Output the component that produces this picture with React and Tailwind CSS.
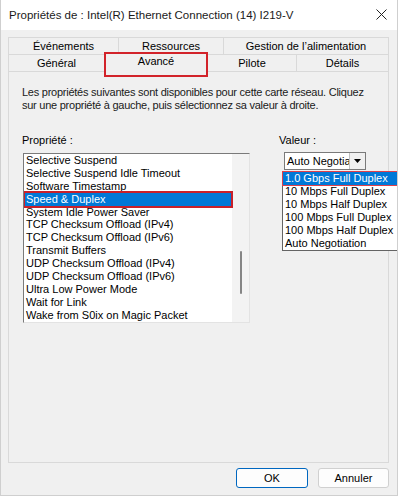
import React from "react";

const props = [
  "Selective Suspend",
  "Selective Suspend Idle Timeout",
  "Software Timestamp",
  "Speed & Duplex",
  "System Idle Power Saver",
  "TCP Checksum Offload (IPv4)",
  "TCP Checksum Offload (IPv6)",
  "Transmit Buffers",
  "UDP Checksum Offload (IPv4)",
  "UDP Checksum Offload (IPv6)",
  "Ultra Low Power Mode",
  "Wait for Link",
  "Wake from S0ix on Magic Packet",
];

const values = [
  "1.0 Gbps Full Duplex",
  "10 Mbps Full Duplex",
  "10 Mbps Half Duplex",
  "100 Mbps Full Duplex",
  "100 Mbps Half Duplex",
  "Auto Negotiation",
];

export default function App() {
  return (
    <div className="w-[398px] h-[496px] bg-[#f0f0f0] flex flex-col font-['Liberation_Sans',Arial,sans-serif] text-black text-[11px] leading-[13px] border-x border-b border-[#cfcfcf] overflow-hidden">
      {/* Title bar */}
      <div className="h-[30px] bg-white flex items-center justify-between pl-[8px] pr-[10px] shrink-0">
        <span className="text-[11.5px] text-[#1a1a1a]">
          Propriétés de : Intel(R) Ethernet Connection (14) I219-V
        </span>
        <svg width="11" height="11" viewBox="0 0 11 11" className="mt-[-2px]">
          <path d="M0.5 0.5 L10.5 10.5 M10.5 0.5 L0.5 10.5" stroke="#222" strokeWidth="1" fill="none" />
        </svg>
      </div>

      {/* Tabs */}
      <div className="relative w-[381px] ml-[7px] mt-[7px] shrink-0">
        <div className="flex h-[17px]">
          <div className="w-[110px] border-t border-l border-[#d9d9d9] flex items-center justify-center">Événements</div>
          <div className="w-[105px] border-t border-l border-[#d9d9d9] flex items-center justify-center">Ressources</div>
          <div className="w-[166px] border-t border-l border-r border-[#d9d9d9] flex items-center justify-center">Gestion de l’alimentation</div>
        </div>
        <div className="flex h-[18px] border-b border-[#d9d9d9]">
          <div className="w-[96px] border-t border-l border-[#d9d9d9] flex items-center justify-center">Général</div>
          <div className="relative z-10 w-[104px] h-[21px] mt-[-2px] border-t border-l border-r border-[#d9d9d9] bg-[#f0f0f0] flex items-start justify-center pt-[2px]">
            Avancé
          </div>
          <div className="w-[88px] border-t border-[#d9d9d9] flex items-center justify-center">Pilote</div>
          <div className="w-[93px] border-t border-l border-r border-[#d9d9d9] flex items-center justify-center">Détails</div>
        </div>
        {/* red annotation */}
        <div className="absolute left-[96px] top-[15px] w-[104px] h-[25px] border-2 border-[#d2232a] z-20" />
      </div>

      {/* Panel */}
      <div className="relative w-[381px] h-[391px] ml-[7px] border-x border-b border-[#d9d9d9] pl-[13px] pt-[14px] shrink-0">
        <div className="whitespace-nowrap text-[#1a1a1a] tracking-[-0.25px]">
          Les propriétés suivantes sont disponibles pour cette carte réseau. Cliquez
          <br />
          sur une propriété à gauche, puis sélectionnez sa valeur à droite.
        </div>

        <div className="flex mt-[22px]">
          {/* Left column */}
          <div className="w-[228px] flex flex-col">
            <div>Propriété :</div>
            <div className="ml-[1px] mt-[6px] w-[227px] h-[170px] border border-t-[#7a7a7a] border-l-[#7a7a7a] border-r-[#e3e3e3] border-b-[#e3e3e3] bg-white flex overflow-hidden">
              <div className="flex-1 flex flex-col">
                {props.map((p) =>
                  p === "Speed & Duplex" ? (
                    <div key={p} className="relative h-[12.9px] leading-[12.9px] bg-[#0078d7] text-white pl-[2px] whitespace-nowrap">
                      {p}
                      <div className="absolute left-[-1px] right-[-1px] top-[-2px] bottom-[-2px] border-2 border-[#c8202a]" />
                    </div>
                  ) : (
                    <div key={p} className="h-[12.9px] leading-[12.9px] pl-[2px] whitespace-nowrap">{p}</div>
                  )
                )}
              </div>
              <div className="w-[17px] bg-[#f3f3f3] flex justify-center pt-[97px]">
                <div className="w-[2px] h-[43px] bg-[#858585] rounded-full" />
              </div>
            </div>
          </div>

          {/* Right column */}
          <div className="ml-[29px] flex flex-col">
            <div>Valeur :</div>
            <div className="relative ml-[5px] mt-[5px] w-[82px] h-[18px] border border-[#7a7a7a] bg-white flex">
              <div className="flex-1 overflow-hidden whitespace-nowrap pl-[2px] pt-[2px]">Auto Negotiation</div>
              <div className="w-[16px] border-l border-[#c0c0c0] bg-[#f0f0f0] flex items-center justify-center">
                <svg width="7" height="4" viewBox="0 0 7 4">
                  <path d="M0 0 H7 L3.5 4 Z" fill="#000" />
                </svg>
              </div>

              {/* Dropdown list */}
              <div className="absolute left-[-3px] top-[18px] w-[117px] border border-[#646464] bg-white flex flex-col z-30">
                {values.map((v, i) =>
                  i === 0 ? (
                    <div key={v} className="relative h-[13px] bg-[#0078d7] text-white pl-[2px] whitespace-nowrap">
                      {v}
                      <div className="absolute inset-[-1px] border border-[#e0404a]" />
                    </div>
                  ) : (
                    <div key={v} className="h-[13px] pl-[2px] whitespace-nowrap">{v}</div>
                  )
                )}
              </div>
            </div>
          </div>
        </div>
      </div>

      {/* Buttons */}
      <div className="flex justify-end gap-[10px] pr-[8px] mt-[5px]">
        <button className="w-[72px] h-[20px] rounded-[3px] border border-[#0067c0] bg-[#fdfdfd] text-[11px] leading-[13px] flex items-center justify-center">
          OK
        </button>
        <button className="w-[71px] h-[20px] rounded-[3px] border border-[#d0d0d0] bg-[#fdfdfd] text-[11px] leading-[13px] flex items-center justify-center">
          Annuler
        </button>
      </div>
    </div>
  );
}
